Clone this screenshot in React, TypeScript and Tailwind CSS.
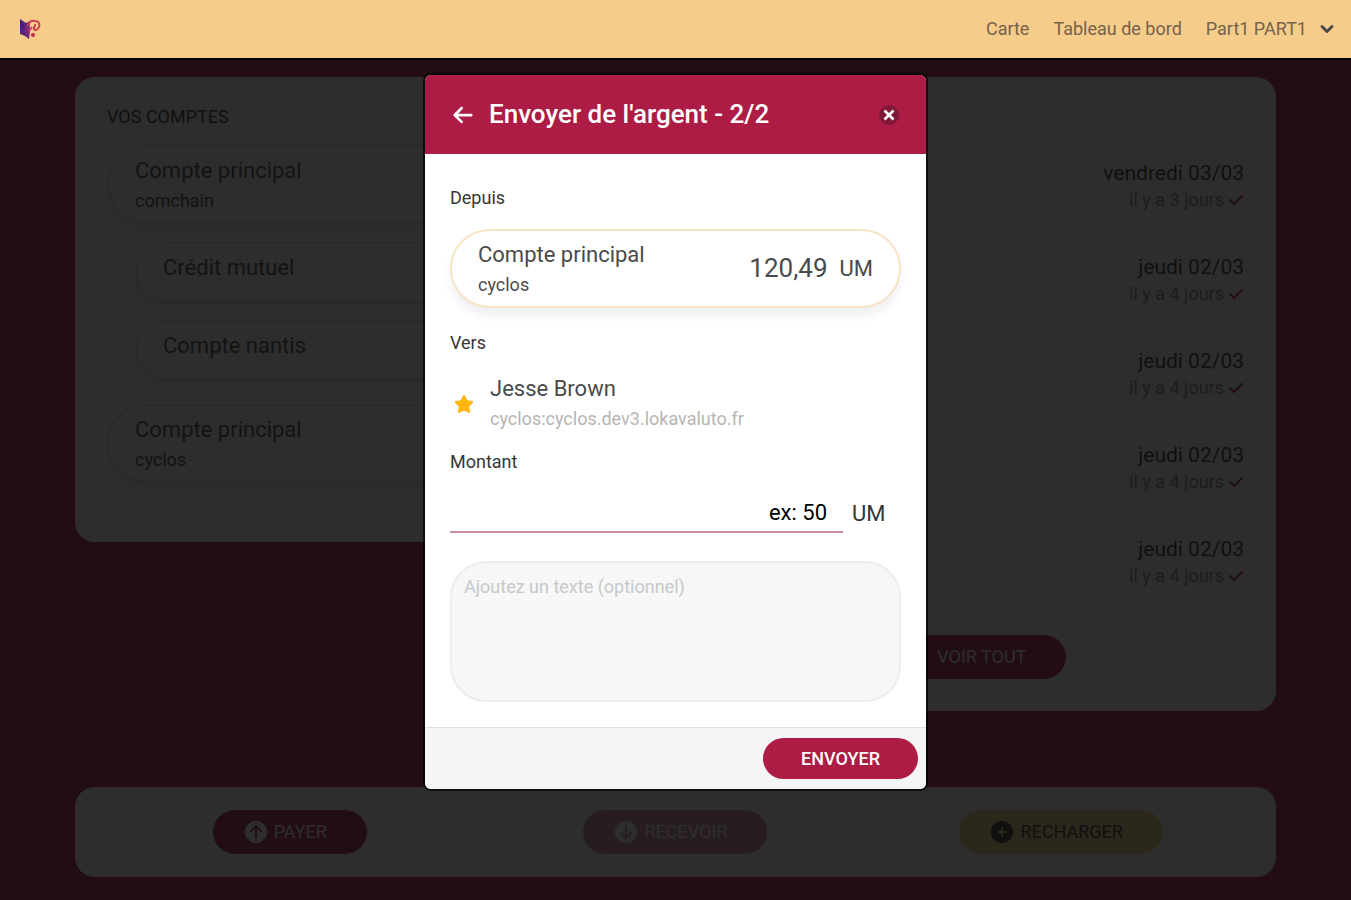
import { useState } from 'react';
import { FaArrowLeft, FaCheck, FaStar, FaCircleArrowUp, FaCircleArrowDown, FaCirclePlus } from 'react-icons/fa6';
import { ChevronDown } from 'lucide-react';

const accounts = [
  { id: 1, name: 'Compte principal', backend: 'comchain', sub: [
    { id: 2, name: 'Crédit mutuel' },
    { id: 3, name: 'Compte nantis' },
  ] },
  { id: 4, name: 'Compte principal', backend: 'cyclos', sub: [] },
];

const transactions = [
  { id: 1, date: 'vendredi 03/03', ago: 'il y a 3 jours' },
  { id: 2, date: 'jeudi 02/03', ago: 'il y a 4 jours' },
  { id: 3, date: 'jeudi 02/03', ago: 'il y a 4 jours' },
  { id: 4, date: 'jeudi 02/03', ago: 'il y a 4 jours' },
  { id: 5, date: 'jeudi 02/03', ago: 'il y a 4 jours' },
];

function Logo() {
  return (
    <svg viewBox="0 0 24 24" className="h-6 w-6" aria-hidden="true">
      <path d="M2 2 L8 6 L12 4 L11 22 L7 19 L2 17 Z" fill="#5a2482" />
      <path d="M2 2 L6 9 L3 17 Z" fill="#3f2170" />
      <path d="M8 6 L12 12 L11 22 L7 15 Z" fill="#7c2a78" />
      <path d="M10 9 C10 5 14 3 17 4 C21 4 22 7 21 10 C20 13 17 14 16 12 C15 10 18 9 17 7" fill="none" stroke="#cf3d56" strokeWidth="2" />
      <circle cx="15" cy="18" r="2" fill="#c02a50" />
      <path d="M11 14 L14 10" stroke="#cf3d56" strokeWidth="2" />
    </svg>
  );
}

type PillProps = {
  name: string;
  backend?: string;
  amount?: string;
};

function AccountPill({ name, backend, amount }: PillProps) {
  return (
    <div className={`flex items-center justify-between rounded-full border-2 border-[#f9e3c6] bg-white px-[26px] pt-[9px] shadow-[0_8px_10px_rgba(0,0,0,0.06)] ${backend ? 'pb-[6px]' : 'pb-[17px]'}`}>
      <div>
        <p className="text-[22px] leading-[30px] text-[#4a4a4a]">{name}</p>
        {backend && <p className="text-lg leading-[30px] text-[#4a4a4a]">{backend}</p>}
      </div>
      {amount && (
        <p className="flex items-center gap-3 pb-1 text-[#4a4a4a]">
          <span className="text-[26px]">{amount}</span>
          <span className="text-[22px]">UM</span>
        </p>
      )}
    </div>
  );
}

function SendMoneyModal() {
  const [amount, setAmount] = useState('');
  const [message, setMessage] = useState('');

  return (
    <form
      role="dialog"
      aria-labelledby="modal-title"
      onSubmit={(e) => e.preventDefault()}
      className="w-full max-w-[501px] overflow-hidden rounded-md bg-white shadow-[0_0_0_2px_rgba(0,0,0,0.7)]"
    >
      <header className="flex h-[79px] items-center bg-[#ac1c44] pr-[27px] pl-7 text-white">
        <button type="button" aria-label="Retour" className="mr-4">
          <FaArrowLeft className="h-[22px] w-5" />
        </button>
        <h2 id="modal-title" className="flex-1 text-[26px] font-medium">Envoyer de l'argent - 2/2</h2>
        <button type="button" aria-label="Fermer" className="flex h-5 w-5 items-center justify-center rounded-full bg-[#7f1836]">
          <svg viewBox="0 0 12 12" className="h-3 w-3" stroke="currentColor" strokeWidth="2.6">
            <path d="M1.5 1.5 L10.5 10.5 M10.5 1.5 L1.5 10.5" />
          </svg>
        </button>
      </header>

      <div className="px-[25px] pt-8 pb-[25px]">
        <p className="mb-[19px] text-lg leading-6 text-[#363636]">Depuis</p>
        <AccountPill name="Compte principal" backend="cyclos" amount="120,49" />

        <p className="mt-[23px] mb-[19px] text-lg leading-6 text-[#363636]">Vers</p>
        <div className="flex items-center gap-4 pl-1">
          <FaStar className="h-[18px] w-5 text-[#ffb70f]" />
          <div>
            <p className="text-[22px] leading-[30px] text-[#4a4a4a]">Jesse Brown</p>
            <p className="text-lg leading-[30px] text-[#b5b5b5]">cyclos:cyclos.dev3.lokavaluto.fr</p>
          </div>
        </div>

        <label htmlFor="amount" className="mt-4 mb-[19px] block text-lg leading-6 text-[#363636]">Montant</label>
        <div className="flex items-center gap-[9px]">
          <input
            id="amount"
            type="text"
            inputMode="decimal"
            placeholder="ex: 50"
            value={amount}
            onChange={(e) => setAmount(e.target.value)}
            className="h-10 min-w-0 flex-1 border-b-2 border-[#c98d9e] px-4 text-right text-[22px] text-black outline-none placeholder:text-black"
          />
          <span className="w-[49px] text-[22px] text-[#363636]">UM</span>
        </div>

        <textarea
          aria-label="Ajoutez un texte"
          placeholder="Ajoutez un texte (optionnel)"
          value={message}
          onChange={(e) => setMessage(e.target.value)}
          className="mt-7 block h-[141px] w-full resize-none rounded-[36px] border-2 border-[#ededed] bg-[#f7f7f7] px-3 py-3 text-lg leading-6 outline-none placeholder:text-[#c6c9c9]"
        />
      </div>

      <footer className="flex justify-end border-t border-[#e0e0e0] bg-[#f5f5f5] px-2 py-[10px]">
        <button type="submit" className="h-[41px] rounded-full bg-[#ac1c44] px-[38px] text-lg font-medium text-white">ENVOYER</button>
      </footer>
    </form>
  );
}

export default function App() {
  return (
    <div className="flex min-h-screen flex-col bg-[#ac1c44] font-[Roboto,sans-serif]">
      <header className="flex h-[60px] items-center justify-between border-b-2 border-black bg-[#f6cc8b] pr-[14px] pl-[18px]">
        <a href="#" aria-label="Accueil"><Logo /></a>
        <nav className="flex items-center gap-6 text-lg text-[#75624a]">
          <a href="#carte">Carte</a>
          <a href="#tableau">Tableau de bord</a>
          <button type="button" className="flex items-center gap-[10px]">
            Part1 PART1
            <ChevronDown className="h-5 w-5 text-[#4a4a4a]" strokeWidth={3.5} />
          </button>
        </nav>
      </header>

      <div className="relative flex-1">
        <main className="px-[75px] pt-[17px] pb-6">
          <div className="grid grid-cols-2 items-start gap-6">
            <section className="rounded-[20px] bg-white px-8 pt-7 pb-[59px]">
              <h2 className="mb-4 text-lg leading-6 text-[#363636]">VOS COMPTES</h2>
              <div className="flex flex-col gap-6">
                {accounts.map(account => (
                  <div key={account.id} className="flex flex-col gap-[18px]">
                    <AccountPill name={account.name} backend={account.backend} />
                    {account.sub.map(sub => (
                      <div key={sub.id} className="pl-7">
                        <AccountPill name={sub.name} />
                      </div>
                    ))}
                  </div>
                ))}
              </div>
            </section>

            <section className="rounded-[20px] bg-white px-8 pt-[60px] pb-8">
              <ul>
                {transactions.map(tx => (
                  <li key={tx.id} className="border-b border-[#e8e8e8] pt-[21px] pb-[18px] text-right last:border-transparent">
                    <p className="text-[21px] leading-[30px] text-[#363636]">{tx.date}</p>
                    <p className="flex items-center justify-end gap-1 text-lg leading-6 text-[#8a8a8a]">
                      {tx.ago}
                      <FaCheck className="h-4 w-4 text-[#ac1c44]" />
                    </p>
                  </li>
                ))}
              </ul>
              <div className="mt-7 flex justify-center">
                <button type="button" className="h-11 rounded-full bg-[#ac1c44] px-10 text-lg text-white">VOIR TOUT</button>
              </div>
            </section>
          </div>

          <section className="mt-[76px] grid h-[90px] grid-cols-3 place-items-center rounded-[20px] bg-white px-[22px]">
            <button type="button" className="flex h-11 items-center gap-[7px] rounded-full bg-[#ac1c44] pr-10 pl-8 text-lg text-white">
              <FaCircleArrowUp className="h-[22px] w-[22px]" />
              PAYER
            </button>
            <button type="button" className="flex h-11 items-center gap-[7px] rounded-full bg-[#ac1c44] pr-10 pl-8 text-lg text-white opacity-50">
              <FaCircleArrowDown className="h-[22px] w-[22px]" />
              RECEVOIR
            </button>
            <button type="button" className="flex h-11 items-center gap-[7px] rounded-full bg-[#eed27c] pr-10 pl-8 text-lg text-[#363636]">
              <FaCirclePlus className="h-[22px] w-[22px]" />
              RECHARGER
            </button>
          </section>
        </main>

        <div className="absolute inset-0 flex items-start justify-center bg-[#0a0a0a]/86 pt-[15px]">
          <SendMoneyModal />
        </div>
      </div>
    </div>
  );
}
